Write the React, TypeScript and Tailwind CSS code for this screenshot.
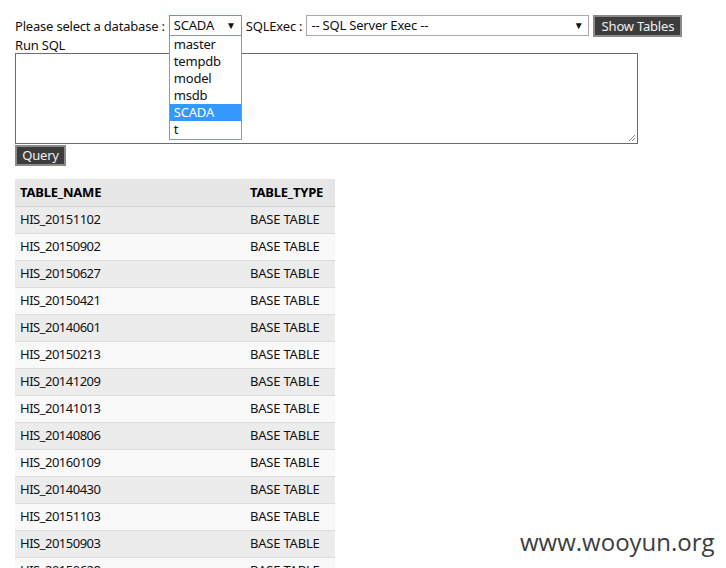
import React from "react";

const rows = [
  "HIS_20151102",
  "HIS_20150902",
  "HIS_20150627",
  "HIS_20150421",
  "HIS_20140601",
  "HIS_20150213",
  "HIS_20141209",
  "HIS_20141013",
  "HIS_20140806",
  "HIS_20160109",
  "HIS_20140430",
  "HIS_20151103",
  "HIS_20150903",
  "HIS_20150628",
];

const databases = ["master", "tempdb", "model", "msdb", "SCADA", "t"];

export default function App() {
  return (
    <div
      className="relative h-[568px] w-[726px] overflow-hidden bg-white pl-[15px] pt-[15px] text-[13px] tracking-[-0.2px] text-[#111]"
      style={{ fontFamily: '"Noto Sans", "Open Sans", sans-serif' }}
    >
      {/* Top row */}
      <div className="flex h-[22px] items-start">
        <span className="mt-[1px] leading-[20px]">Please select a database :</span>
        <div className="relative ml-[4px] flex h-[21px] w-[73px] items-center border border-[#5b9bd5] px-[4px] leading-none">
          <span>SCADA</span>
          <span className="absolute right-[5px] top-[4px] text-[10px]">▼</span>

          {/* open dropdown */}
          <div className="absolute left-[-1px] top-[19px] z-10 w-[73px] border border-[#7f9db9] bg-white pb-[1px]">
            {databases.map((d) => (
              <div
                key={d}
                className={
                  d === "SCADA"
                    ? "h-[17px] bg-[#3399ff] px-[4px] leading-[17px] text-white"
                    : "h-[17px] px-[4px] leading-[17px]"
                }
              >
                {d}
              </div>
            ))}
          </div>
        </div>
        <span className="ml-[4px] mt-[1px] leading-[20px]">SQLExec :</span>
        <div className="relative ml-[4px] flex h-[21px] w-[283px] items-center border border-[#a9a9a9] px-[4px] leading-none">
          <span>-- SQL Server Exec --</span>
          <span className="absolute right-[5px] top-[4px] text-[10px]">▼</span>
        </div>
        <button className="ml-[4px] h-[22px] w-[89px] border-2 border-[#8a8a8a] bg-[#3c3c3c] leading-none text-[#f0f0f0]">
          Show Tables
        </button>
      </div>

      <div className="leading-[16px]">Run SQL</div>

      <div className="relative h-[91px] w-[623px] border border-[#6b6b6b]">
        {/* resize grip */}
        <svg className="absolute bottom-[1px] right-[1px]" width="8" height="8" viewBox="0 0 8 8">
          <path d="M7 1 L1 7 M7 4 L4 7" stroke="#8a8a8a" strokeWidth="1" />
        </svg>
      </div>

      <button className="mt-[1px] h-[21px] w-[51px] border-2 border-[#8a8a8a] bg-[#3c3c3c] leading-none text-[#f0f0f0]">
        Query
      </button>

      {/* Result table */}
      <table className="mt-[13px] w-[320px] border-collapse">
        <thead>
          <tr className="h-[27px] border-b border-[#d2d2d2] bg-[#e6e6e6]">
            <th className="pl-[5px] text-left font-bold text-black">TABLE_NAME</th>
            <th className="text-left font-bold text-black">TABLE_TYPE</th>
          </tr>
        </thead>
        <tbody>
          {rows.map((r, i) => (
            <tr
              key={r}
              className={
                i % 2 === 0
                  ? "h-[27px] border-b border-[#dcdcdc] bg-[#ececec]"
                  : "h-[27px] border-b border-[#dcdcdc] bg-[#f9f9f9]"
              }
            >
              <td className="pl-[5px] tracking-[-0.5px]">{r}</td>
              <td className="w-[85px]">BASE TABLE</td>
            </tr>
          ))}
        </tbody>
      </table>

      {/* watermark */}
      <div
        className="absolute left-[520px] top-[524px] text-[24px] tracking-normal text-[#3d3d3d]"
        style={{ fontFamily: '"Open Sans", sans-serif' }}
      >
        www.wooyun.org
      </div>
    </div>
  );
}
